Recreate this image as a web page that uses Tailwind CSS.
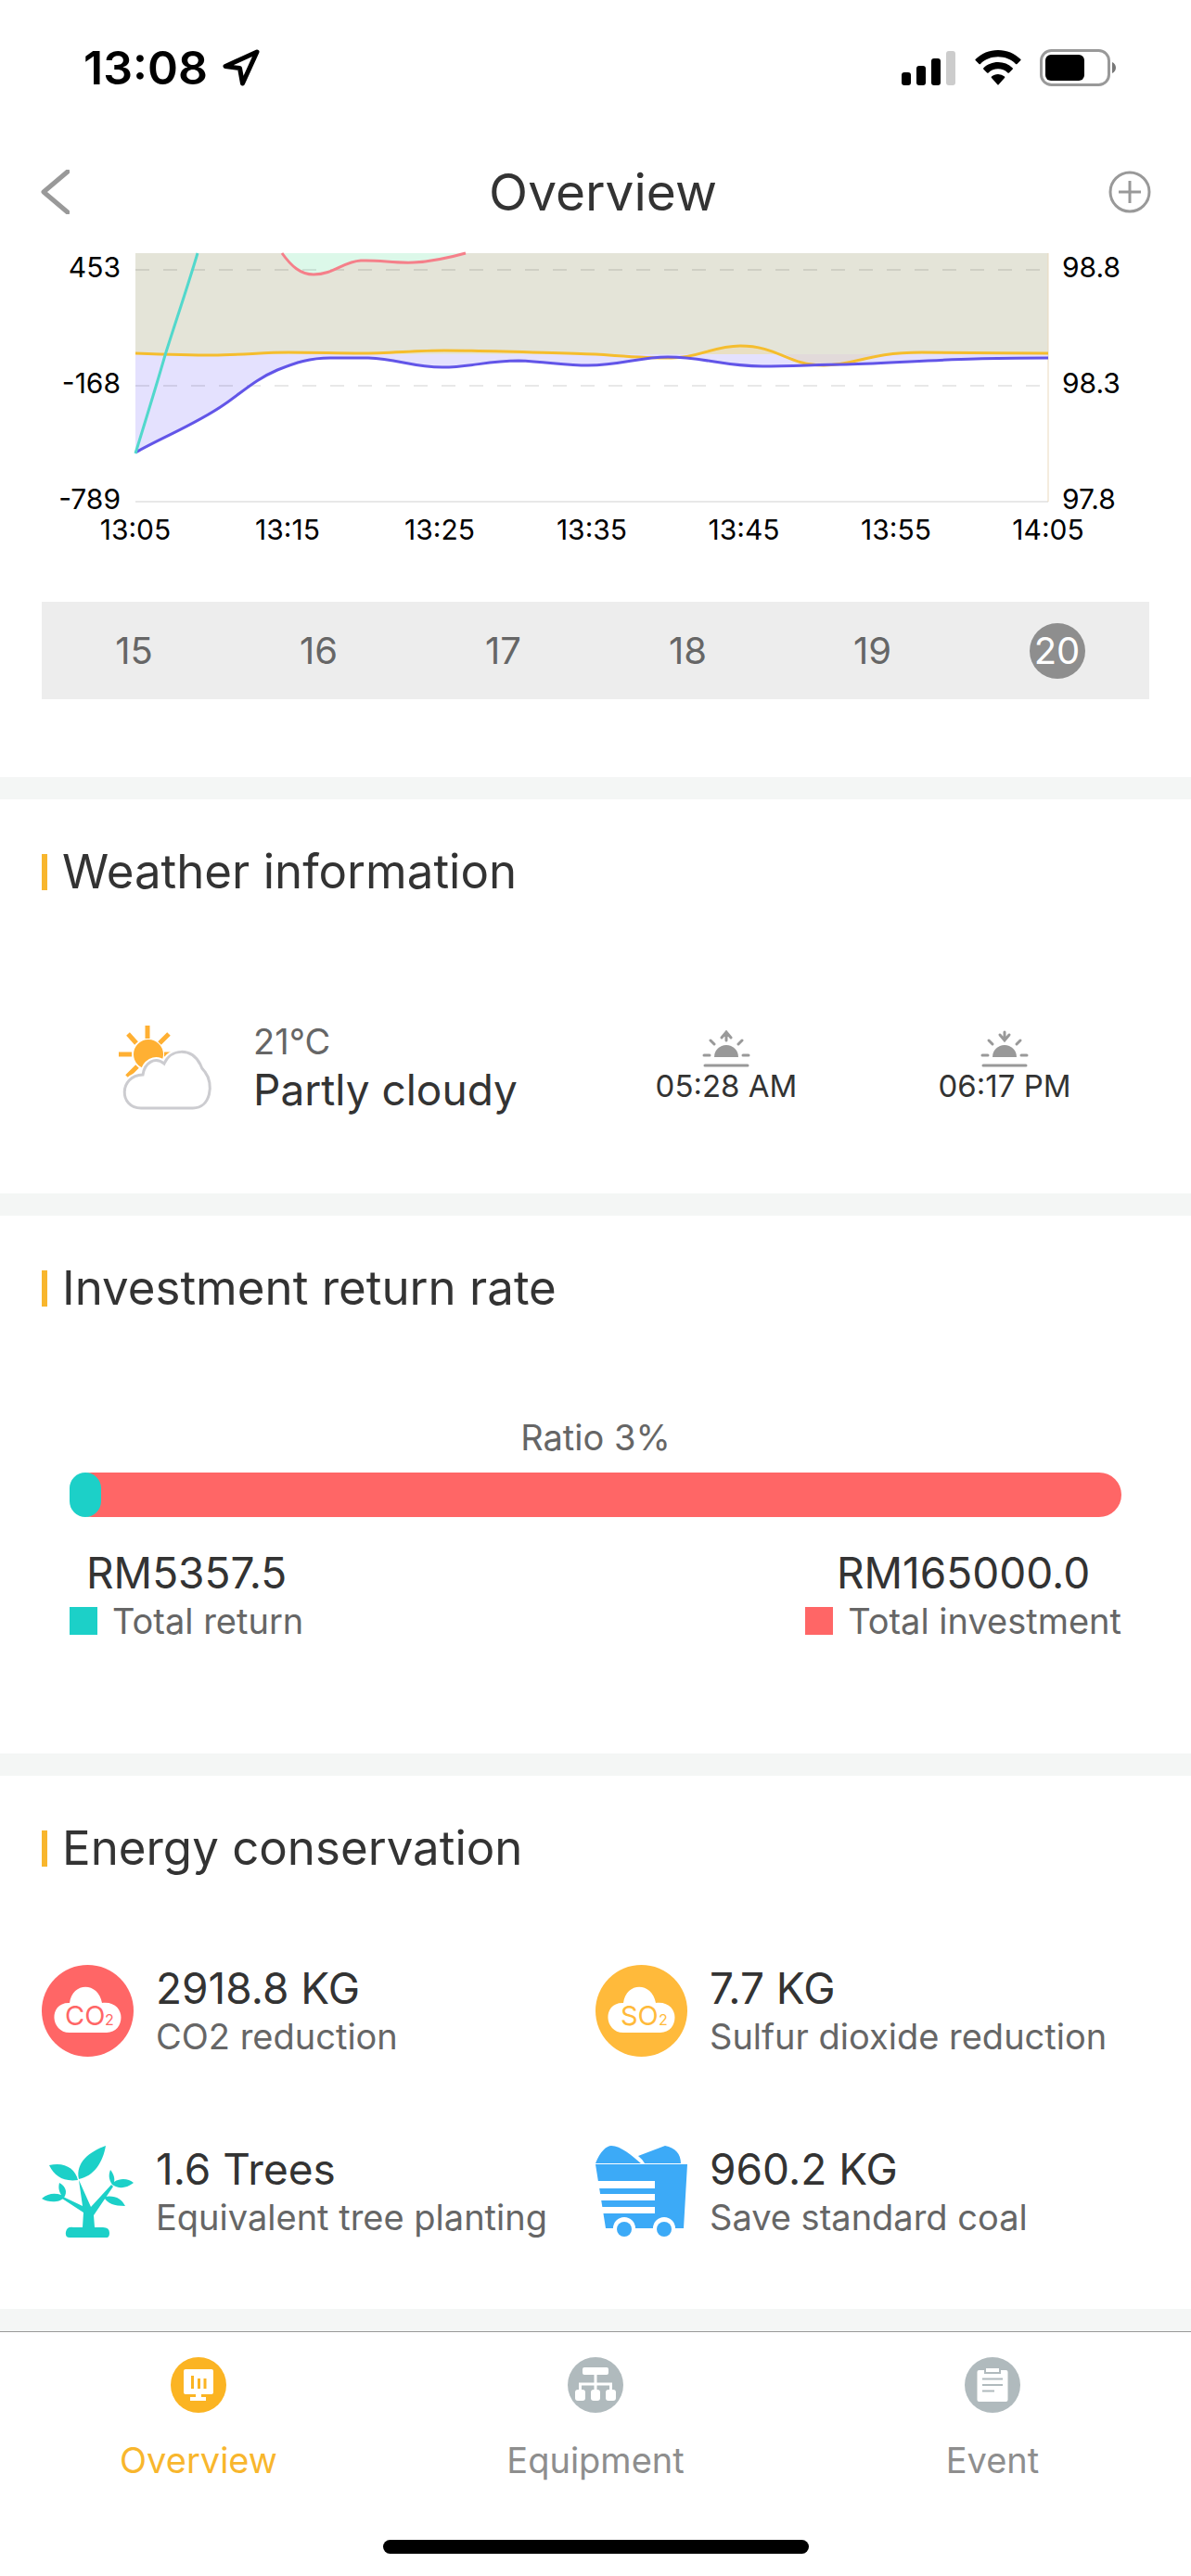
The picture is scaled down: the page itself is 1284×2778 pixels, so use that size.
<!DOCTYPE html>
<html lang="en">
<head>
  <meta charset="UTF-8">
  <meta name="viewport" content="width=device-width, initial-scale=1.0">
  <title>Overview</title>
  <script src="https://cdn.jsdelivr.net/npm/@tailwindcss/browser@4"></script>
</head>
<body class="bg-white text-[#333] font-['Inter','Liberation_Sans',sans-serif] flex flex-col min-h-screen">

  <!-- status bar -->
  <div class="flex items-center justify-between h-[146px] pl-[90px] pr-[81px] text-black">
    <div class="flex items-center gap-4">
      <span class="text-[50px] leading-[60px] font-semibold">13:08</span>
      <svg class="w-10 h-10" viewBox="0 0 40 40" fill="none" stroke="#000" stroke-width="5" stroke-linejoin="round"><path d="M37 3 3 18.500 18.500 20.500 21.500 37Z"/></svg>
    </div>
    <div class="flex items-center gap-5">
      <svg class="w-[60px] h-10" viewBox="0 0 60 40">
        <rect x="1" y="25" width="10" height="14" rx="3"/>
        <rect x="17" y="18" width="10" height="21" rx="3"/>
        <rect x="33" y="10" width="10" height="29" rx="3"/>
        <rect x="49" y="2" width="10" height="37" rx="3" fill="#ccc"/>
      </svg>
      <svg class="w-[50px] h-10" viewBox="0 0 50 40">
        <path d="M25 1C15.500 1 7 4.700.8 10.800a1 1 0 0 0 0 1.500l3.700 3.600a1 1 0 0 0 1.500 0C11 11 17.700 8.300 25 8.300S39 11 44 15.900a1 1 0 0 0 1.500 0l3.700-3.600a1 1 0 0 0 0-1.500C43 4.700 34.500 1 25 1Z"/>
        <path d="M25 14c-6 0-11.500 2.300-15.600 6.200a1 1 0 0 0 0 1.500l3.700 3.700a1 1 0 0 0 1.500 0A15 15 0 0 1 25 21.200a15 15 0 0 1 10.400 4.200 1 1 0 0 0 1.500 0l3.700-3.700a1 1 0 0 0 0-1.500A22.600 22.600 0 0 0 25 14Z"/>
        <path d="M25 27c-2.700 0-5.100 1-7 2.600a1 1 0 0 0 0 1.500l6.200 6.800a1 1 0 0 0 1.600 0l6.200-6.800a1 1 0 0 0 0-1.500A11 11 0 0 0 25 27Z"/>
      </svg>
      <svg class="w-[82px] h-10" viewBox="0 0 82 40">
        <rect x="1.500" y="1.500" width="73" height="37" rx="11" fill="none" stroke="#999" stroke-width="3"/>
        <rect x="6" y="6" width="42" height="28" rx="6"/>
        <path d="M78 14c2.500 1.200 4 3.400 4 6s-1.500 4.800-4 6Z" fill="#777"/>
      </svg>
    </div>
  </div>

  <!-- title bar -->
  <header class="flex items-center justify-between h-[127px] px-[43px] pb-[6px]">
    <button class="w-16 h-12" aria-label="Back">
      <svg class="w-8 h-12" viewBox="0 0 32 48" fill="none" stroke="#999" stroke-width="5" stroke-linecap="round" stroke-linejoin="round"><path d="M30 2 4 24 30 46"/></svg>
    </button>
    <h1 class="text-[55px] leading-[72px]">Overview</h1>
    <button class="w-12 h-12" aria-label="Add">
      <svg class="w-12 h-12" viewBox="0 0 48 48" fill="none" stroke="#999" stroke-width="3"><circle cx="25" cy="24" r="21"/><path d="M13 24h24M25 12v24"/></svg>
    </button>
  </header>

  <main>
    <!-- chart -->
    <section class="px-11">
      <svg class="w-full h-auto overflow-visible" viewBox="0 0 1196 320" font-size="30" fill="#000" role="img" aria-label="Power chart">
        <path fill="#e4e4d8" d="M102 0H1086V109H102Z"/>
        <path fill="#dcf8e9" d="M260 0C270 14 280 23 294 23C316 23 326 9 345 8C365 7 380 11 402 10C424 9 440 5 458 0Z"/>
        <path fill="#e4e1fe" d="M102 109V215C132 198 168 184 198 163C222 146 232 136 255 126C275 118 290 113 312 113H353C385 114 400 123 433 123C465 123 480 116 515 116C545 117 565 121 590 121C625 121 645 112 676 112C715 112 735 122 778 122C810 122 840 120 868 120C915 119 960 115 1008 114C1035 113 1060 113 1086 113V109Z"/>
        <path fill="#e9dfc2" d="M702 109C720 102 735 101 754 101C775 101 785 105 800 109Z"/>
        <path fill="#e2dada" d="M802 109C815 115 828 121 850 121C872 121 880 114 905 109Z"/>
        <g stroke="#000" stroke-opacity=".09" stroke-width="2">
          <path stroke-dasharray="15 15" d="M102 18H1086M102 143H1086"/>
          <path d="M102 268H1086"/>
        </g>
        <path d="M1086 0V268" stroke="#ead9bd" stroke-width="1"/>
        <g fill="none" stroke-width="3">
          <path stroke="#f5808a" d="M260 0C270 14 280 23 294 23C316 23 326 9 345 8C365 7 380 11 402 10C424 9 440 5 458 0"/>
          <path stroke="#f5bd2e" d="M102 108C130 109 160 110 185 110C215 110 240 107 267 107C295 107 320 108 345 108C375 108 405 105 435 105C490 105 550 108 598 109C630 111 650 113 680 113C710 113 725 100 754 100C795 100 805 121 844 121C880 121 890 107 950 107C1000 107 1040 108 1086 108"/>
          <path stroke="#6255e8" d="M102 215C132 198 168 184 198 163C222 146 232 136 255 126C275 118 290 113 312 113H353C385 114 400 123 433 123C465 123 480 116 515 116C545 117 565 121 590 121C625 121 645 112 676 112C715 112 735 122 778 122C810 122 840 120 868 120C915 119 960 115 1008 114C1035 113 1060 113 1086 113"/>
          <path stroke="#52d8cc" d="M102 216C113 180 124 145 134 110C145 75 158 37 169 0"/>
        </g>
        <g text-anchor="end">
          <text x="86" y="26">453</text>
          <text x="86" y="151">-168</text>
          <text x="86" y="276">-789</text>
        </g>
        <g>
          <text x="1101" y="26">98.8</text>
          <text x="1101" y="151">98.3</text>
          <text x="1101" y="276">97.8</text>
        </g>
        <g text-anchor="middle">
          <text x="102" y="309">13:05</text>
          <text x="266" y="309">13:15</text>
          <text x="430" y="309">13:25</text>
          <text x="594" y="309">13:35</text>
          <text x="758" y="309">13:45</text>
          <text x="922" y="309">13:55</text>
          <text x="1086" y="309">14:05</text>
        </g>
      </svg>
    </section>

    <!-- day picker -->
    <div class="mx-[45px] mt-14 mb-[84px] h-[105px] bg-[#ededed] grid grid-cols-6 items-center justify-items-center text-[40px] text-[#666]">
      <button class="w-[60px] h-[60px]">15</button>
      <button class="w-[60px] h-[60px]">16</button>
      <button class="w-[60px] h-[60px]">17</button>
      <button class="w-[60px] h-[60px]">18</button>
      <button class="w-[60px] h-[60px]">19</button>
      <button class="w-[60px] h-[60px] rounded-full bg-[#8e8e8e] text-white">20</button>
    </div>

    <section class="border-t-24 border-[#f4f6f5] px-[45px] pt-[46px] pb-[84px]">
      <h2 class="flex items-center gap-4 text-[51px] leading-16"><span class="w-[6px] h-[39px] bg-[#f8b62d]"></span>Weather information</h2>
      <div class="flex items-center mt-[127px] pl-[83px] pr-[6px]">
        <svg class="w-[102px] h-[92px] shrink-0" viewBox="0 0 102 92">
          <g stroke="#ffb033" stroke-width="5">
            <path d="M31 1V15M10 10 19 20M54 10 44 20M0 32H14M49 32H58M9 56 20 45"/>
          </g>
          <circle cx="32" cy="32" r="16" fill="#ffb033"/>
          <path d="M26 54C28 41 39 34 49 42C56 26 78 24 88 43C89 47 91 49 93 51C103 64 99 90 80 90H24C0 90 0 55 26 54Z" fill="#fff" stroke="#fff" stroke-width="7"/>
          <path d="M26 54C28 41 39 34 49 42C56 26 78 24 88 43C89 47 91 49 93 51C103 64 99 90 80 90H24C0 90 0 55 26 54Z" fill="#fff" stroke="#ccccd0" stroke-width="3"/>
        </svg>
        <div class="ml-[43px] w-[360px]">
          <p class="text-[38px] leading-[48px] text-[#666]">21°C</p>
          <p class="text-[46px] leading-[56px]">Partly cloudy</p>
        </div>
        <div class="grow grid grid-cols-2 text-[33px] leading-10">
          <div class="flex flex-col items-center">
            <svg class="w-14 h-10" viewBox="0 0 56 40" fill="none" stroke="#999" stroke-width="3" stroke-linecap="round"><path d="M28 11V3M23 8 28 2 33 8M11 11 15 15M45 11 41 15M4 27H10M46 27H52M5 38H51"/><path d="M15 29a13 13 0 0 1 26 0Z" fill="#999" stroke="none"/></svg>
            <span>05:28 AM</span>
          </div>
          <div class="flex flex-col items-center">
            <svg class="w-14 h-10" viewBox="0 0 56 40" fill="none" stroke="#999" stroke-width="3" stroke-linecap="round"><path d="M28 2V10M23 5 28 11 33 5M11 11 15 15M45 11 41 15M4 27H10M46 27H52M5 38H51"/><path d="M15 29a13 13 0 0 1 26 0Z" fill="#999" stroke="none"/></svg>
            <span>06:17 PM</span>
          </div>
        </div>
      </div>
    </section>

    <section class="border-t-24 border-[#f4f6f5] px-[45px] pt-[46px] pb-[119px]">
      <h2 class="flex items-center gap-4 text-[51px] leading-16"><span class="w-[6px] h-[39px] bg-[#f8b62d]"></span>Investment return rate</h2>
      <div class="mt-[105px] px-[30px]">
        <p class="text-center text-[38px] leading-[48px] text-[#666]">Ratio 3%</p>
        <div class="mt-[14px] h-12 rounded-3xl bg-[#ff6666]">
          <div class="h-12 rounded-3xl bg-[#1cd0c8]" style="width: 3%"></div>
        </div>
        <div class="flex justify-between mt-8 text-center">
          <div>
            <p class="text-[46px] leading-[56px]">RM5357.5</p>
            <p class="flex items-center gap-4 text-[38px] leading-[48px] text-[#666]"><span class="w-[30px] h-[30px] bg-[#1cd0c8]"></span>Total return</p>
          </div>
          <div>
            <p class="text-[46px] leading-[56px]">RM165000.0</p>
            <p class="flex items-center gap-4 text-[38px] leading-[48px] text-[#666]"><span class="w-[30px] h-[30px] bg-[#ff6666]"></span>Total investment</p>
          </div>
        </div>
      </div>
    </section>

    <section class="border-y-24 border-[#f4f6f5] px-[45px] pt-[46px] pb-[75px]">
      <h2 class="flex items-center gap-4 text-[51px] leading-16"><span class="w-[6px] h-[39px] bg-[#f8b62d]"></span>Energy conservation</h2>
      <div class="grid grid-cols-2 gap-y-[91px] mt-[91px]">
        <div class="flex items-center gap-6">
          <svg class="w-[99px] h-[99px] shrink-0" viewBox="0 0 99 99">
            <circle cx="49.500" cy="49.500" r="49.500" fill="#ff6666"/>
            <path d="M30 41C33 18 61 18 65 41C92 38 91 73 70 73H30C9 73 7 40 30 41Z" fill="#fff"/>
            <text x="25" y="65" font-size="29" fill="#ff6666">CO</text>
            <text x="68" y="65" font-size="16" fill="#ff6666">2</text>
          </svg>
          <div>
            <p class="text-[46px] leading-[56px]">2918.8 KG</p>
            <p class="text-[38px] leading-[48px] text-[#666]">CO2 reduction</p>
          </div>
        </div>
        <div class="flex items-center gap-6">
          <svg class="w-[99px] h-[99px] shrink-0" viewBox="0 0 99 99">
            <circle cx="49.500" cy="49.500" r="49.500" fill="#ffba3b"/>
            <path d="M30 41C33 18 61 18 65 41C92 38 91 73 70 73H30C9 73 7 40 30 41Z" fill="#fff"/>
            <text x="27" y="65" font-size="29" fill="#ffba3b">SO</text>
            <text x="68" y="65" font-size="16" fill="#ffba3b">2</text>
          </svg>
          <div>
            <p class="text-[46px] leading-[56px]">7.7 KG</p>
            <p class="text-[38px] leading-[48px] text-[#666]">Sulfur dioxide reduction</p>
          </div>
        </div>
        <div class="flex items-center gap-6">
          <svg class="w-[99px] h-[99px] shrink-0" viewBox="0 0 99 99" fill="#1cd0c8">
            <path d="M69 0C66 18 56 33 40 36C36 18 52 6 69 0ZM8 21C24 17 36 24 39 37C23 39 14 33 8 21ZM19 40C26 44 28 50 24 56C20 61 8 62 0 57C7 51 14 51 21 53C18 48 18 44 19 40ZM74 26C78 31 79 36 78 39C86 34 94 36 99 40C90 47 82 46 76 42C72 36 72 31 74 26ZM67 55C79 53 86 57 90 65C78 65 70 62 67 55Z"/>
            <path d="M40 37 53 66 75 42 77 44 56 75 57 88H66Q73 88 73 94T68 99H30Q25 99 26 93T34 88H44L45 72 22 57 23 55 44 65Z"/>
          </svg>
          <div>
            <p class="text-[46px] leading-[56px]">1.6 Trees</p>
            <p class="text-[38px] leading-[48px] text-[#666]">Equivalent tree planting</p>
          </div>
        </div>
        <div class="flex items-center gap-6">
          <svg class="w-[99px] h-[99px] shrink-0" viewBox="0 0 99 99" fill="#3caaf7">
            <path d="M0 19C5 6 12 0 17 0C27 0 40 11 49 19ZM46 11 75 0C86 2 92 9 92 19H53Q50 14 46 11ZM0 20H99L95 89H86A12 12 0 0 0 62 89H43A12 12 0 0 0 19 89H11Z"/>
            <path fill="#fff" d="M0 38H64V46H0ZM0 52H64V59H0ZM0 66H64V73H0Z"/>
            <circle cx="31" cy="90" r="8"/>
            <circle cx="74" cy="90" r="8"/>
          </svg>
          <div>
            <p class="text-[46px] leading-[56px]">960.2 KG</p>
            <p class="text-[38px] leading-[48px] text-[#666]">Save standard coal</p>
          </div>
        </div>
      </div>
    </section>
  </main>

  <!-- tab bar -->
  <nav class="grow border-t border-[#999] flex flex-col justify-between items-center pt-[27px] pb-6">
    <div class="w-full grid grid-cols-3 text-[38px] leading-[48px] text-[#8e8e8e]">
      <a href="#overview" class="flex flex-col items-center gap-[27px] text-[#f8b62d]">
        <svg class="w-[60px] h-[60px]" viewBox="0 0 60 60">
          <circle cx="30" cy="30" r="30" fill="#fbb423"/>
          <path fill="#fff" d="M16 13H44Q46 13 46 15V38Q46 40 44 40H33V43H38V47H21V43H27V40H16Q14 40 14 38V15Q14 13 16 13Z"/>
          <path stroke="#fbb423" stroke-width="3" d="M23.500 20V34M30.500 23V34M37 23V34"/>
        </svg>
        Overview
      </a>
      <a href="#equipment" class="flex flex-col items-center gap-[27px]">
        <svg class="w-[60px] h-[60px]" viewBox="0 0 60 60">
          <circle cx="30" cy="30" r="30" fill="#b0babd"/>
          <path fill="none" stroke="#fff" stroke-width="3" d="M30 18V37M13.500 37V29H46.500V37"/>
          <g fill="#fff"><rect x="16" y="11" width="28" height="8" rx="2"/><rect x="8" y="35" width="11" height="12" rx="3"/><rect x="25" y="35" width="10" height="12" rx="3"/><rect x="41" y="35" width="11" height="12" rx="3"/></g>
        </svg>
        Equipment
      </a>
      <a href="#event" class="flex flex-col items-center gap-[27px]">
        <svg class="w-[60px] h-[60px]" viewBox="0 0 60 60">
          <circle cx="30" cy="30" r="30" fill="#b0babd"/>
          <rect x="13.500" y="14" width="33" height="34" rx="2" fill="#fff"/>
          <rect x="23" y="12" width="14" height="5" fill="#fff"/>
          <path fill="none" stroke="#b0babd" stroke-width="2" d="M22 13V17H38V13M19 23.500H41M19 30H41M19 36.500H32"/>
        </svg>
        Event
      </a>
    </div>
    <div class="w-[459px] h-[15px] rounded-full bg-black"></div>
  </nav>

</body>
</html>
